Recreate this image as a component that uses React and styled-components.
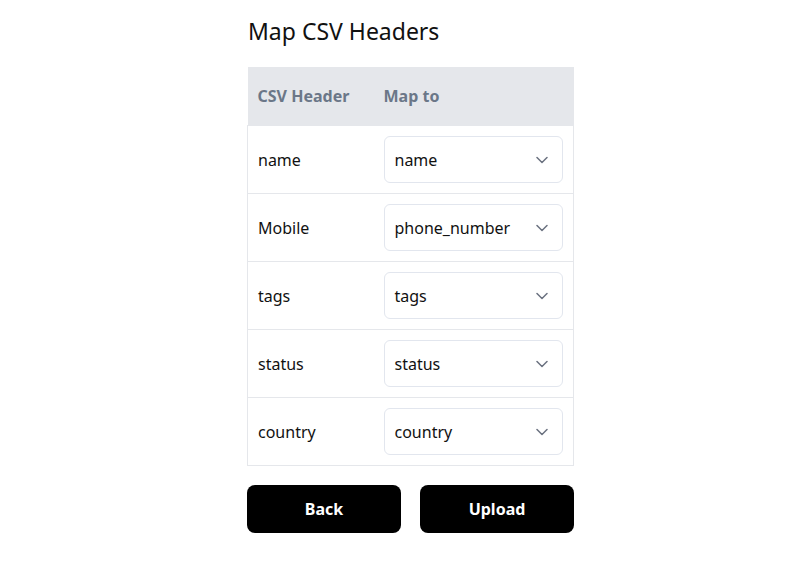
import React from "react"
import styled, { createGlobalStyle } from "styled-components"

const GlobalStyle = createGlobalStyle`
  html, body {
    margin: 0;
    background: #ffffff;
  }
  body {
    font-family: "Noto Sans", "Open Sans", sans-serif;
    color: #111111;
  }
`

const Page = styled.div`
  width: 810px;
  display: flex;
  justify-content: center;
  padding: 15px 0 0 11px;
  box-sizing: border-box;
`

const Card = styled.div`
  width: 327px;
  display: flex;
  flex-direction: column;
`

const Title = styled.h1`
  margin: 0 0 19px 1px;
  font-size: 23px;
  font-weight: 400;
  line-height: 33px;
  color: #111111;
`

const Table = styled.table`
  width: 100%;
  border-collapse: collapse;
  font-size: 16px;
`

const HeadCell = styled.th`
  background: #e5e7eb;
  color: #6b7788;
  font-weight: 700;
  text-align: left;
  height: 58px;
  padding: 1px 10px 0;
  font-size: 16px;
  width: ${props => props.$width || "auto"};
  box-sizing: border-box;
`

const Row = styled.tr`
  border: 1px solid #e5e7eb;
`

const Cell = styled.td`
  height: 68px;
  padding: 1px 10px 0;
  color: #111111;
  box-sizing: border-box;
`

const SelectBox = styled.div`
  height: 47px;
  border: 1px solid #e2e6ee;
  border-radius: 6px;
  display: flex;
  align-items: center;
  justify-content: space-between;
  padding: 0 14px 0 10px;
  box-sizing: border-box;
  color: #111111;
`

const Chevron = () => (
  <svg width="12" height="8" viewBox="0 0 12 8" fill="none">
    <path d="M1 1.5 L6 6.5 L11 1.5" stroke="#6b7280" strokeWidth="1.5" strokeLinecap="round" strokeLinejoin="round" />
  </svg>
)

const Actions = styled.div`
  display: flex;
  gap: 19px;
  margin-top: 19px;
`

const Button = styled.button`
  flex: 1;
  height: 48px;
  border: none;
  border-radius: 8px;
  background: #000000;
  color: #ffffff;
  font-family: inherit;
  font-size: 16px;
  font-weight: 700;
  cursor: pointer;
`

const mappings = [
  ["name", "name"],
  ["Mobile", "phone_number"],
  ["tags", "tags"],
  ["status", "status"],
  ["country", "country"],
]

const App = () => {
  return (
    <>
      <GlobalStyle />
      <Page>
        <Card>
          <Title>Map CSV Headers</Title>
          <Table>
            <thead>
              <tr>
                <HeadCell $width="126px">CSV Header</HeadCell>
                <HeadCell>Map to</HeadCell>
              </tr>
            </thead>
            <tbody>
              {mappings.map(([csv, field]) => (
                <Row key={csv}>
                  <Cell>{csv}</Cell>
                  <Cell>
                    <SelectBox>
                      <span>{field}</span>
                      <Chevron />
                    </SelectBox>
                  </Cell>
                </Row>
              ))}
            </tbody>
          </Table>
          <Actions>
            <Button>Back</Button>
            <Button>Upload</Button>
          </Actions>
        </Card>
      </Page>
    </>
  )
}

export default App
